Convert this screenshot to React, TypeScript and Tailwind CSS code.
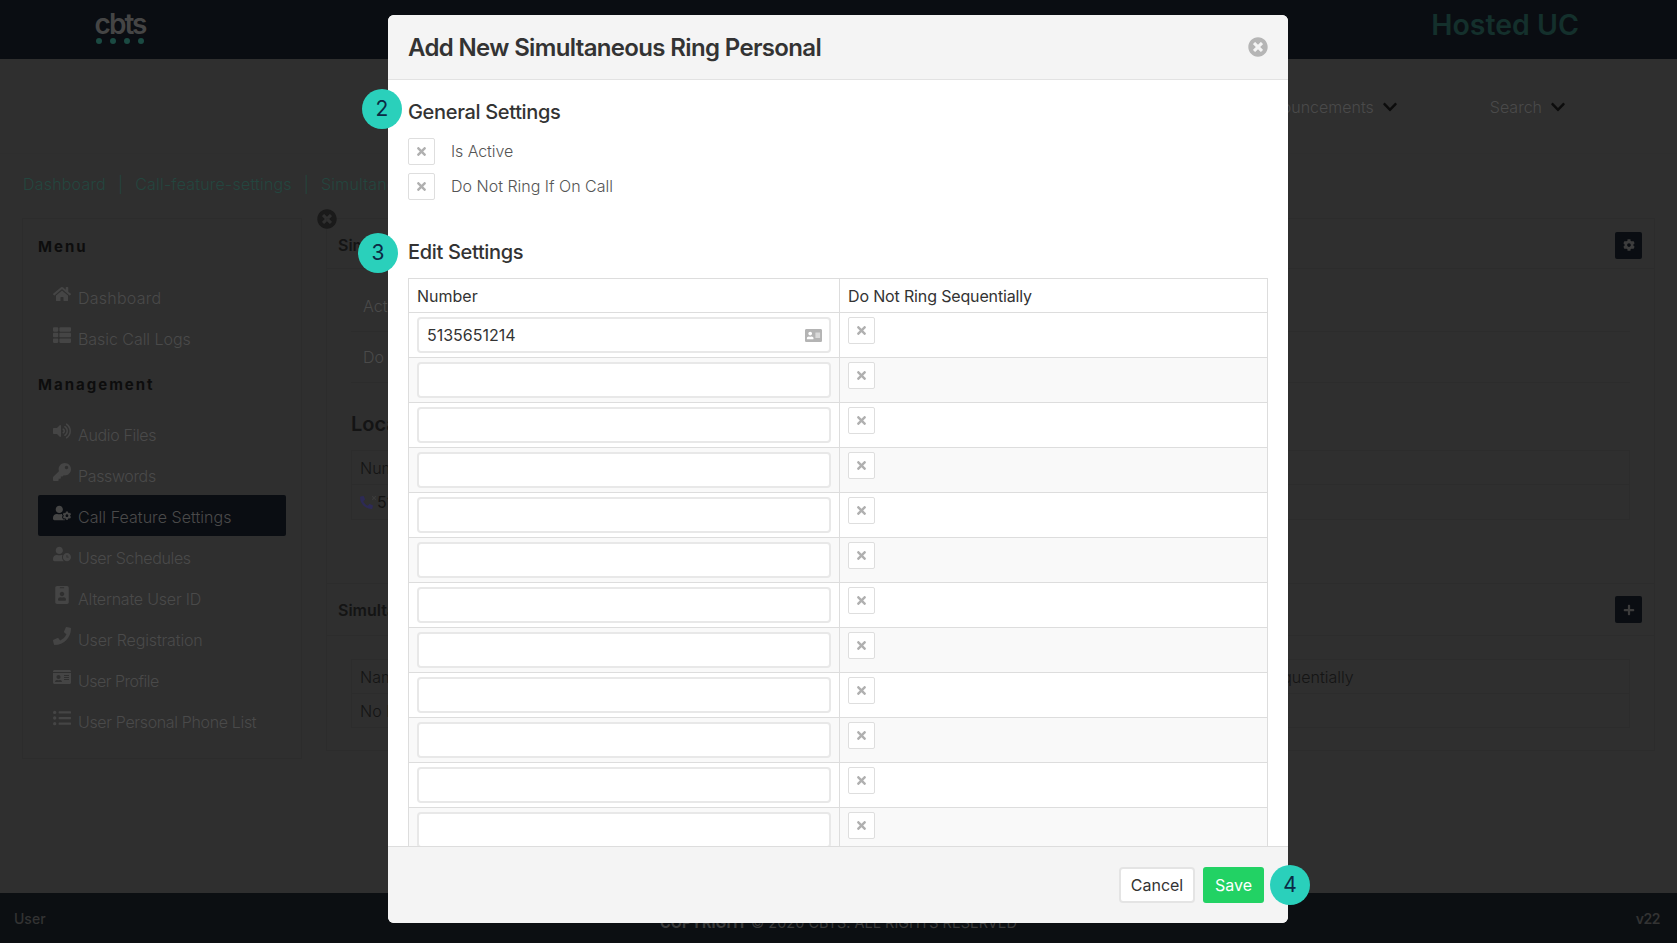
import React from 'react';
import {
  FaHome, FaThList, FaVolumeUp, FaKey, FaUserCog, FaUserClock, FaIdBadge, FaPhone, FaIdCard, FaAddressCard,
  FaListUl, FaTimes, FaTimesCircle, FaChevronDown, FaCog, FaPlus,
} from 'react-icons/fa';

const font = "font-['Inter',sans-serif]";

const MenuItem = ({ icon, label, active, spacing }: { icon: React.ReactNode; label: string; active?: boolean; spacing: string }) => (
  <div className={`flex items-center h-[41px] pl-[15px] rounded-[2px] ${active ? 'bg-[#0a0d12]' : ''}`}>
    <span className="w-[25px] -mt-[5px] flex justify-start text-[#454545] text-[18px]">{icon}</span>
    <span className={`mt-[2px] text-[16px] font-light text-[#4a4a4a] ${spacing}`}>{label}</span>
  </div>
);

const NavItem = ({ label }: { label: string }) => (
  <div className="flex items-center gap-[8px]">
    <span className="text-[16px] font-light text-[#4a4a4a]">{label}</span>
    <FaChevronDown className="text-[#0c0c0c] text-[16px] mt-[1px]" />
  </div>
);

const Check = () => (
  <span className="w-[27px] h-[27px] shrink-0 border border-[#dedede] rounded-[2px] bg-white flex items-center justify-center">
    <FaTimes className="text-[#b0b0b0] text-[13px]" />
  </span>
);

const Badge = ({ n, className }: { n: number; className: string }) => (
  <div className={`absolute w-[40px] h-[40px] rounded-full bg-[#2ad0bb] text-[#0b2a45] text-[21px] flex items-center justify-center ${className}`}>
    {n}
  </div>
);

const rows = Array.from({ length: 14 }, (_, i) => i);

export default function App() {
  return (
    <div className={`relative w-[1677px] h-[943px] overflow-hidden bg-[#2f2f2f] ${font}`}>
      {/* page behind the dialog */}
      <div className="flex flex-col h-full">
        <header className="h-[59px] shrink-0 bg-[#0a0d12] flex items-center justify-between pl-[96px] pr-[98px]">
          <div className="-mt-[4px] flex flex-col items-center w-[48px]">
            <span className="text-[28px] leading-[27px] font-semibold text-[#454545] tracking-[-2px]">cbts</span>
            <div className="flex justify-between w-full">
              <span className="w-[6px] h-[6px] rounded-full bg-[#1b4a42]" />
              <span className="w-[6px] h-[6px] rounded-full bg-[#1b4a42]" />
              <span className="w-[6px] h-[6px] rounded-full bg-[#1b4a42]" />
              <span className="w-[6px] h-[6px] rounded-full bg-[#1b4a42]" />
            </div>
          </div>
          <span className="-mt-[8px] text-[28.5px] font-semibold text-[#14302c]">Hosted UC</span>
        </header>

        <nav className="h-[95px] shrink-0 pt-[1px] flex items-center justify-end gap-[92px] pr-[111px] border-b border-[#2e2e2e]">
          <NavItem label="Announcements" />
          <NavItem label="Search" />
        </nav>

        <div className="h-[64px] shrink-0 pb-[4px] flex items-center gap-[12px] pl-[23px] text-[16px] font-light tracking-[0.2px] text-[#24463f]">
          <span>Dashboard</span>
          <span>|</span>
          <span>Call-feature-settings</span>
          <span>|</span>
          <span>Simultaneous Ring Personal</span>
        </div>

        <div className="flex-1 flex gap-[24px] px-[22px] items-start">
          <aside className="w-[280px] h-[541px] shrink-0 border border-[#2c2c2c] px-[15px] pt-[17px]">
            <div className="text-[15px] font-bold tracking-[2px] text-[#0d0d0d] h-[22px]">Menu</div>
            <div className="mt-[18px]">
              <MenuItem icon={<FaHome />} label="Dashboard" spacing="tracking-[0.25px]" />
              <MenuItem icon={<FaThList />} label="Basic Call Logs" spacing="tracking-[-0.05px]" />
            </div>
            <div className="text-[15px] font-bold tracking-[2px] text-[#0d0d0d] mt-[16px] h-[22px]">Management</div>
            <div className="mt-[17px]">
              <MenuItem icon={<FaVolumeUp />} label="Audio Files" spacing="tracking-[-0.35px]" />
              <MenuItem icon={<FaKey />} label="Passwords" spacing="tracking-[-0.35px]" />
              <MenuItem icon={<FaUserCog />} label="Call Feature Settings" active spacing="tracking-[0.05px]" />
              <MenuItem icon={<FaUserClock />} label="User Schedules" spacing="tracking-[-0.35px]" />
              <MenuItem icon={<FaIdBadge />} label="Alternate User ID" spacing="tracking-[-0.2px]" />
              <MenuItem icon={<FaPhone />} label="User Registration" spacing="tracking-[-0.15px]" />
              <MenuItem icon={<FaIdCard />} label="User Profile" spacing="tracking-[-0.5px]" />
              <MenuItem icon={<FaListUl />} label="User Personal Phone List" spacing="tracking-[-0.35px]" />
            </div>
          </aside>

          <main className="relative flex-1 h-[533px] border border-[#2c2c2c]">
            <FaTimesCircle className="absolute -left-[10px] -top-[10px] text-[20px] text-[#1a1a1a]" />
            <div className="h-[50px] pt-[3px] border-b border-[#2c2c2c] flex items-center justify-between pl-[11px] pr-[12px]">
              <span className="text-[16px] font-semibold text-[#141414]">Simultaneous Ring Personal</span>
              <span className="w-[27px] h-[27px] bg-[#0a0d12] rounded-[2px] flex items-center justify-center">
                <FaCog className="text-[12px] text-[#3c3c3c]" />
              </span>
            </div>
            <div className="mx-[24px] h-[63px] border-b border-[#2c2c2c] flex items-center pl-[12px] pt-[11px] text-[16px] font-light text-[#4a4a4a]">Active</div>
            <div className="mx-[24px] h-[51px] border-b border-[#2c2c2c] flex items-center pl-[12px] text-[16px] font-light text-[#4a4a4a]">Do Not Ring</div>
            <div className="mx-[24px] mt-[26px] h-[41px] text-[20px] font-semibold text-[#141414]">Local Numbers</div>
            <div className="mx-[24px] border border-[#2c2c2c] text-[16px] text-[#141414]">
              <div className="h-[34px] border-b border-[#2c2c2c] flex items-center pl-[8px] font-light">Number</div>
              <div className="h-[34px] flex items-center pl-[8px]">
                <span className="relative w-[16px] mr-[1px]">
                  <FaPhone className="text-[13px] text-[#2d2a55] -scale-x-100" />
                  <FaTimes className="absolute left-[11px] -top-[1px] text-[6px] text-[#3c3c3c]" />
                </span>
                5135651214
              </div>
            </div>
            <div className="mt-[63px] h-[53px] border-y border-[#2c2c2c] flex items-center justify-between pl-[11px] pr-[12px]">
              <span className="text-[16px] font-semibold text-[#141414]">Simultaneous Ring Personal List</span>
              <span className="w-[27px] h-[27px] bg-[#0a0d12] rounded-[2px] flex items-center justify-center">
                <FaPlus className="text-[12px] text-[#3c3c3c]" />
              </span>
            </div>
            <div className="mt-[23px] mx-[24px] border border-[#2c2c2c] text-[16px] font-light text-[#141414]">
              <div className="h-[34px] border-b border-[#2c2c2c] flex items-center pl-[8px]">
                <span className="w-[809px]">Name</span>
                <span>Do Not Ring Sequentially</span>
              </div>
              <div className="h-[33px] flex items-center pl-[8px]">No Data</div>
            </div>
          </main>
        </div>

        <footer className="relative h-[50px] shrink-0 bg-[#0c0f12] flex items-center justify-between pl-[14px] pr-[17px] text-[14px] text-[#333333]">
          <span className="font-medium">User</span>
          <span className="absolute left-0 right-0 top-[19px] text-center text-[14.5px] text-[#3a3a3a]">
            <b>COPYRIGHT</b> © 2020 CBTS. ALL RIGHTS RESERVED
          </span>
          <span className="font-semibold tracking-[-0.5px]">v22</span>
        </footer>
      </div>

      {/* dialog */}
      <div className="absolute left-[388px] top-[15px] w-[900px] h-[908px] bg-white rounded-[6px] flex flex-col overflow-hidden">
        <div className="h-[65px] shrink-0 pt-[1px] bg-[#f4f4f4] border-b border-[#e2e2e2] flex items-center justify-between pl-[20px] pr-[20px]">
          <h2 className="text-[24px] font-semibold text-[#333333] tracking-[-0.65px]">Add New Simultaneous Ring Personal</h2>
          <FaTimesCircle className="text-[20px] text-[#b5b5b5] -mt-[1px]" />
        </div>

        <div className="flex-1 min-h-0 overflow-hidden pl-[20px] pr-[20px]">
          <h3 className="mt-[18px] h-[28px] text-[20px] leading-[28px] font-medium text-[#333333] tracking-[-0.33px]">General Settings</h3>
          <div className="mt-[12px] flex flex-col gap-[8px]">
            <label className="flex items-center gap-[16px] text-[16px] font-light text-[#555555]">
              <Check />
              <span className="-mt-[2px] tracking-[-0.1px]">Is Active</span>
            </label>
            <label className="flex items-center gap-[16px] text-[16px] font-light text-[#555555]">
              <Check />
              <span className="-mt-[2px]">Do Not Ring If On Call</span>
            </label>
          </div>
          <h3 className="mt-[38px] h-[28px] text-[20px] leading-[28px] font-medium text-[#333333] tracking-[-0.33px]">Edit Settings</h3>
          <table className="mt-[12px] w-[860px] border-collapse table-fixed text-[16px] text-[#333333]">
            <thead>
              <tr className="h-[34px]">
                <th className="w-[431px] border border-[#dddddd] pl-[8px] text-left font-normal">Number</th>
                <th className="border border-[#dddddd] pl-[8px] text-left font-normal tracking-[-0.15px]">Do Not Ring Sequentially</th>
              </tr>
            </thead>
            <tbody>
              {rows.map((i) => (
                <tr key={i} className={`h-[45px] ${i % 2 === 1 ? 'bg-[#f9f9f9]' : 'bg-white'}`}>
                  <td className="border border-[#dddddd] px-[8px] align-middle">
                    <div className="h-[36px] border-2 border-[#e8e8e8] rounded-[4px] bg-white flex items-center justify-between pl-[8px] pr-[7px]">
                      {i === 0 && (
                        <>
                          <span>5135651214</span>
                          <FaAddressCard className="text-[17px] text-[#b4b4b4]" />
                        </>
                      )}
                    </div>
                  </td>
                  <td className="border border-[#dddddd] px-[8px] align-top pt-[4px]">
                    <Check />
                  </td>
                </tr>
              ))}
            </tbody>
          </table>
        </div>

        <div className="h-[77px] shrink-0 bg-[#f4f4f4] border-t border-[#dddddd] flex items-center justify-end gap-[8px] pr-[24px]">
          <button className="w-[76px] h-[36px] bg-white border-2 border-[#e4e4e4] rounded-[4px] text-[16px] text-[#333333]">Cancel</button>
          <button className="w-[61px] h-[36px] bg-[#22d264] rounded-[3px] text-[16px] text-white">Save</button>
        </div>
      </div>

      <Badge n={2} className="left-[362px] top-[89px]" />
      <Badge n={3} className="left-[358px] top-[233px]" />
      <Badge n={4} className="left-[1270px] top-[865px]" />
    </div>
  );
}
